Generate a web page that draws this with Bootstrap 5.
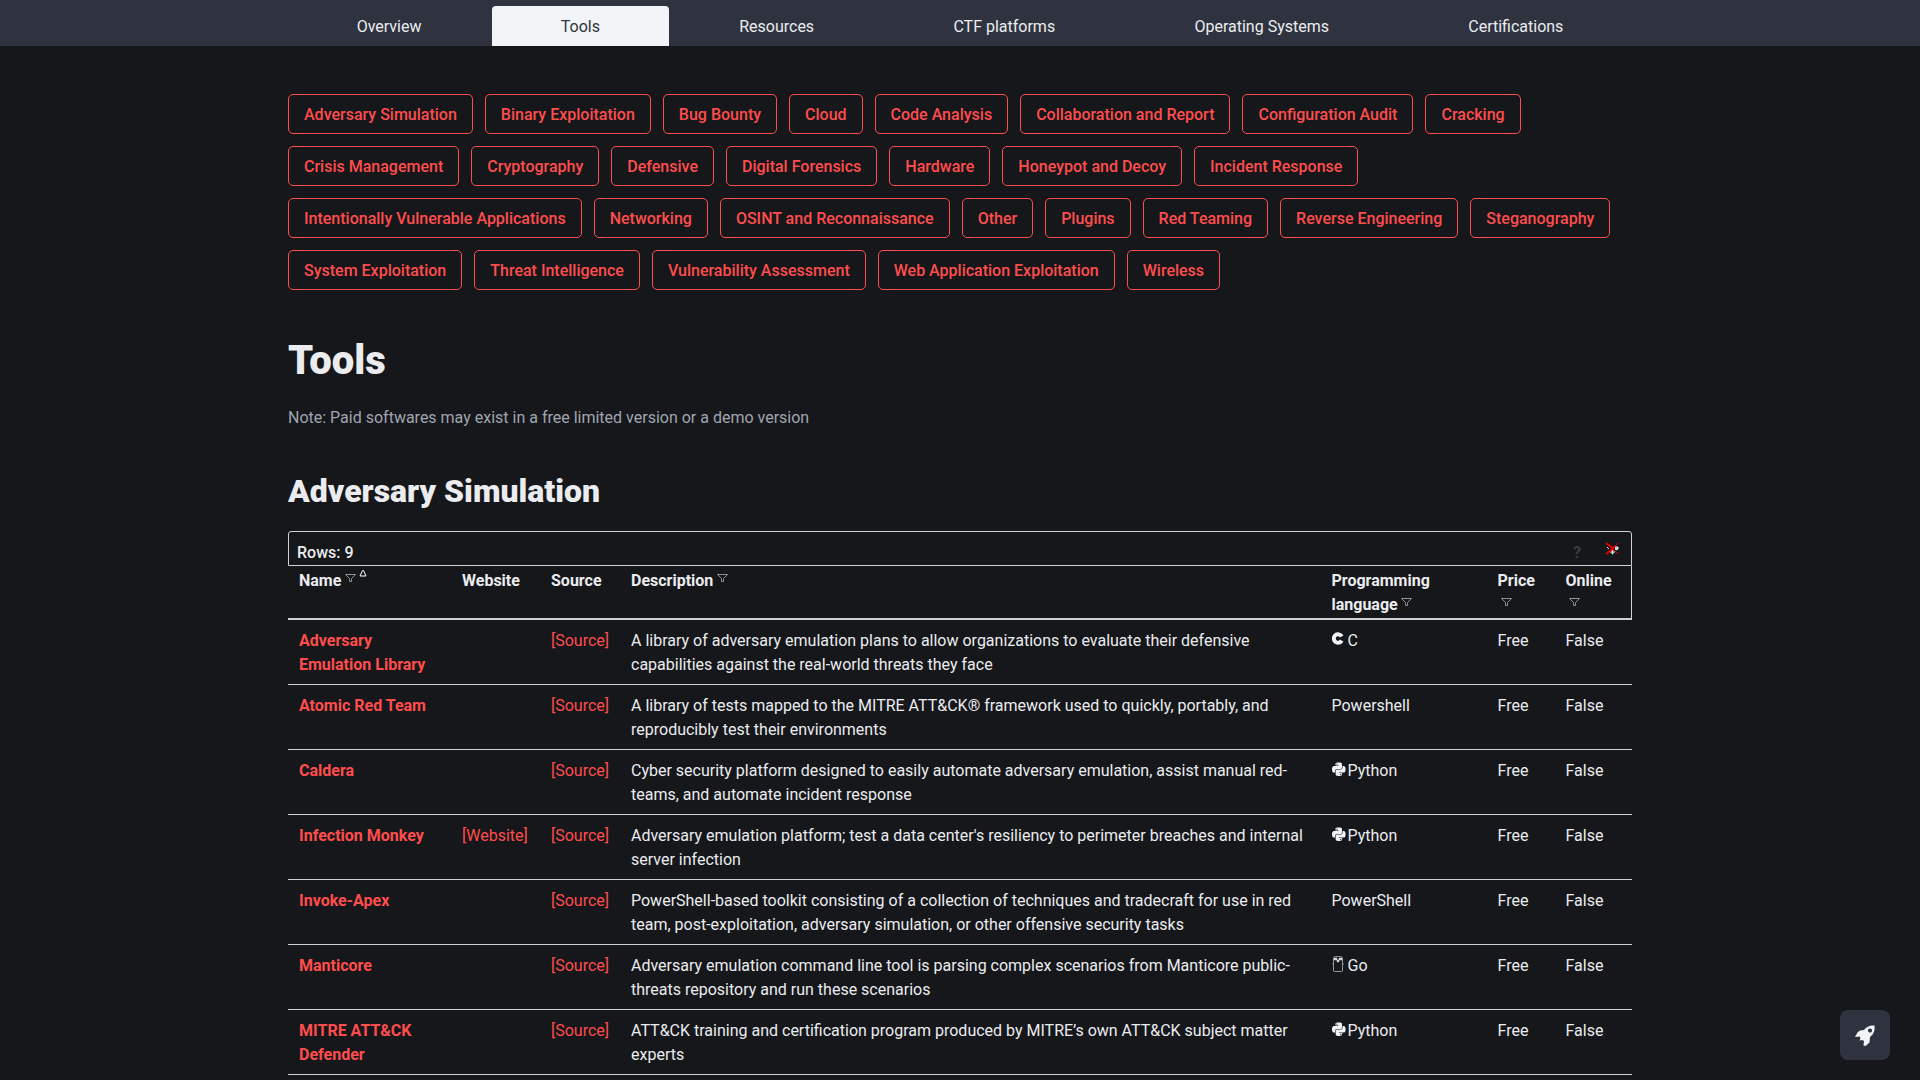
<!DOCTYPE html>
<html lang="en">
<head>
<meta charset="utf-8">
<meta name="viewport" content="width=device-width, initial-scale=1">
<title>Tools</title>
<link href="https://cdn.jsdelivr.net/npm/bootstrap@5.3.0/dist/css/bootstrap.min.css" rel="stylesheet">
<style>
  :root { --ink: #ebecf0; --paper: #15171a; --bar: #2f333f; --accent: #ff4d4d; --line: #ced2d4; }
  body { background: var(--paper); color: var(--ink); font-family: Roboto, sans-serif; font-size: 16px; line-height: 24px; overflow-x: hidden; }
  .page-wrap { max-width: 1344px; }
  .top-bar { background: var(--bar); padding-top: 6px; }
  .top-tabs { gap: 2px; }
  .top-tabs .nav-link { color: var(--ink); padding: 9px 8px 7px; border-radius: 4px 4px 0 0; }
  .top-tabs .nav-link.active { background: #f3f4f7; color: #2f333f; }
  .category-list { gap: 12px; padding-top: 48px; }
  .category-list .btn { --bs-btn-color: var(--accent); --bs-btn-border-color: var(--accent); --bs-btn-hover-bg: var(--accent); --bs-btn-hover-color: #fff; --bs-btn-border-radius: 5px; --bs-btn-line-height: 24px; padding: 8px 15px 6px; font-weight: 500; }
  h1 { font-size: 40px; line-height: 48px; font-weight: 900; margin: 47px 0 21px; }
  h2 { font-size: 32px; line-height: 40px; font-weight: 900; margin: 0 0 20px; }
  .note-text { color: #a0a5b1; margin: 0 0 41px; }
  .filter-bar { border: 1px solid var(--line); border-radius: 3px 3px 0 0; height: 35px; padding: 9px 11px 0 8px; font-weight: 500; }
  .help-btn { color: #3a3c40; font-weight: 700; margin-right: 24px; }
  .reset-btn { margin-top: 1px; }
  .plain-btn { background: none; border: 0; padding: 0; line-height: 24px; }
  .tool-table { --bs-table-bg: transparent; --bs-table-color: var(--ink); table-layout: fixed; margin: 0; border-color: var(--line); color: var(--ink); }
  .tool-table > :not(caption) > * > * { padding: 9px 11px 7px; border-bottom: 1px solid var(--line); }
  .tool-table > thead > tr > th { padding: 3px 11px 1px; border-bottom: 2px solid var(--line); font-weight: 700; vertical-align: top; }
  .tool-table > thead > tr > th:last-child { border-right: 1px solid var(--line); }
  .tool-table a { color: var(--accent); text-decoration: none; }
  .w-name { width: 163px; } .w-site { width: 89px; } .w-source { width: 80px; }
  .w-lang { width: 166px; } .w-price { width: 68px; } .w-online { width: 77px; }
  .filter-icon { width: 11px; height: 8px; margin-left: 4px; vertical-align: 4px; }
  .filter-icon.low { margin-left: 3px; }
  .sort-icon { width: 8px; height: 7px; margin-left: 3px; vertical-align: 9px; }
  .lang-icon { width: 14px; height: 16px; margin-right: 2px; vertical-align: -1px; }
  .top-btn { width: 50px; height: 50px; right: 30px; bottom: 20px; background: var(--bar); border: 0; border-radius: 8px; }
</style>
</head>
<body>
<svg class="d-none" aria-hidden="true">
  <symbol id="funnel" viewBox="0 0 11 8"><path d="M.5 .5h10L6.5 4.500V7.500h-2V4.500z" fill="none" stroke="#8d8f92"/></symbol>
  <symbol id="python" viewBox="0 -16 460 526"><path fill="#f0f2f5" d="M439.800 200.500c-7.700-30.900-22.300-54.200-53.400-54.200h-40.100v47.400c0 36.800-31.200 67.800-66.800 67.800H172.700c-29.200 0-53.400 25-53.400 54.300v101.800c0 29 25.200 46 53.400 54.300 33.800 9.900 66.300 11.700 106.800 0 26.900-7.800 53.400-23.500 53.400-54.300v-40.700H226.200v-13.600h160.200c31.100 0 42.600-21.700 53.400-54.200 11.200-33.500 10.700-65.700 0-108.600zM286.200 404c11.100 0 20.100 9.100 20.100 20.300 0 11.300-9 20.400-20.100 20.400-11 0-20.100-9.200-20.100-20.400.1-11.300 9.100-20.300 20.100-20.300zM167.800 248.100h106.800c29.700 0 53.400-24.500 53.400-54.300V91.900c0-29-24.400-50.700-53.400-55.600-35.800-5.900-74.700-5.600-106.800.1-45.200 8-53.400 24.700-53.400 55.600v40.700h106.900v13.600h-147c-31.100 0-58.300 18.700-66.800 54.200-9.800 40.700-10.200 66.100 0 108.600 7.600 31.600 25.700 54.200 56.800 54.200H101v-48.800c0-35.300 30.500-66.400 66.800-66.400zm-6.700-142.600c-11.100 0-20.100-9.100-20.100-20.300.1-11.300 9-20.400 20.100-20.400 11 0 20.100 9.200 20.100 20.400s-9 20.300-20.100 20.300z"/></symbol>
</svg>

<header class="top-bar">
  <div class="page-wrap mx-auto">
    <nav class="nav nav-fill top-tabs" aria-label="Main">
      <a class="nav-link" href="#">Overview</a>
      <a class="nav-link active" aria-current="page" href="#">Tools</a>
      <a class="nav-link" href="#">Resources</a>
      <a class="nav-link" href="#">CTF platforms</a>
      <a class="nav-link" href="#">Operating Systems</a>
      <a class="nav-link" href="#">Certifications</a>
    </nav>
  </div>
</header>

<main class="page-wrap mx-auto">
  <div class="category-list d-flex flex-wrap">
    <a class="btn" href="#">Adversary Simulation</a>
    <a class="btn" href="#">Binary Exploitation</a>
    <a class="btn" href="#">Bug Bounty</a>
    <a class="btn" href="#">Cloud</a>
    <a class="btn" href="#">Code Analysis</a>
    <a class="btn" href="#">Collaboration and Report</a>
    <a class="btn" href="#">Configuration Audit</a>
    <a class="btn" href="#">Cracking</a>
    <a class="btn" href="#">Crisis Management</a>
    <a class="btn" href="#">Cryptography</a>
    <a class="btn" href="#">Defensive</a>
    <a class="btn" href="#">Digital Forensics</a>
    <a class="btn" href="#">Hardware</a>
    <a class="btn" href="#">Honeypot and Decoy</a>
    <a class="btn" href="#">Incident Response</a>
    <a class="btn" href="#">Intentionally Vulnerable Applications</a>
    <a class="btn" href="#">Networking</a>
    <a class="btn" href="#">OSINT and Reconnaissance</a>
    <a class="btn" href="#">Other</a>
    <a class="btn" href="#">Plugins</a>
    <a class="btn" href="#">Red Teaming</a>
    <a class="btn" href="#">Reverse Engineering</a>
    <a class="btn" href="#">Steganography</a>
    <a class="btn" href="#">System Exploitation</a>
    <a class="btn" href="#">Threat Intelligence</a>
    <a class="btn" href="#">Vulnerability Assessment</a>
    <a class="btn" href="#">Web Application Exploitation</a>
    <a class="btn" href="#">Wireless</a>
  </div>

  <h1>Tools</h1>
  <p class="note-text">Note: Paid softwares may exist in a free limited version or a demo version</p>
  <h2>Adversary Simulation</h2>

  <div class="filter-bar d-flex align-items-start">
    <span class="me-auto">Rows: 9</span>
    <button type="button" class="plain-btn help-btn" title="Help">?</button>
    <button type="button" class="plain-btn reset-btn d-flex" aria-label="Clear filters">
      <svg width="15" height="14" viewBox="0 0 15 14"><path d="M2 5l4 4v4h3V9l4-4z" fill="#000"/><path d="M2 5l2 2M10 5h3v2l-2 1zM7 8h1v4H7zM5 10h5" fill="#b9d3dc" stroke="#dfe8ea"/><path d="M1 1l4 3 4 4M1 12l5-4 4-4" fill="none" stroke="#e00000" stroke-width="2"/><path d="M9 8l4 4M10 4l3-3" fill="none" stroke="#e00000"/></svg>
    </button>
  </div>

  <table class="table tool-table">
    <colgroup><col class="w-name"><col class="w-site"><col class="w-source"><col><col class="w-lang"><col class="w-price"><col class="w-online"></colgroup>
    <thead>
      <tr>
        <th scope="col">Name<svg class="filter-icon"><use href="#funnel"/></svg><svg class="sort-icon" viewBox="0 0 8 7"><path d="M3.500 .5h1l2.500 5.500h-6z" fill="none" stroke="#fff"/></svg></th>
        <th scope="col">Website</th>
        <th scope="col">Source</th>
        <th scope="col">Description<svg class="filter-icon"><use href="#funnel"/></svg></th>
        <th scope="col">Programming language<svg class="filter-icon low"><use href="#funnel"/></svg></th>
        <th scope="col">Price <svg class="filter-icon low"><use href="#funnel"/></svg></th>
        <th scope="col">Online <svg class="filter-icon low"><use href="#funnel"/></svg></th>
      </tr>
    </thead>
    <tbody>
      <tr>
        <td><a class="fw-bold" href="#">Adversary Emulation Library</a></td><td></td><td><a href="#">[Source]</a></td>
        <td>A library of adversary emulation plans to allow organizations to evaluate their defensive capabilities against the real-world threats they face</td>
        <td><svg class="lang-icon" viewBox="0 0 14 16"><path d="M9.700 5.500A4.200 4.200 0 1 0 9.700 9.500" fill="none" stroke="#f0f2f5" stroke-width="4"/></svg>C</td><td>Free</td><td>False</td>
      </tr>
      <tr>
        <td><a class="fw-bold" href="#">Atomic Red Team</a></td><td></td><td><a href="#">[Source]</a></td>
        <td>A library of tests mapped to the MITRE ATT&amp;CK® framework used to quickly, portably, and reproducibly test their environments</td>
        <td>Powershell</td><td>Free</td><td>False</td>
      </tr>
      <tr>
        <td><a class="fw-bold" href="#">Caldera</a></td><td></td><td><a href="#">[Source]</a></td>
        <td>Cyber security platform designed to easily automate adversary emulation, assist manual red-teams, and automate incident response</td>
        <td><svg class="lang-icon"><use href="#python"/></svg>Python</td><td>Free</td><td>False</td>
      </tr>
      <tr>
        <td><a class="fw-bold" href="#">Infection Monkey</a></td><td><a href="#">[Website]</a></td><td><a href="#">[Source]</a></td>
        <td>Adversary emulation platform; test a data center's resiliency to perimeter breaches and internal server infection</td>
        <td><svg class="lang-icon"><use href="#python"/></svg>Python</td><td>Free</td><td>False</td>
      </tr>
      <tr>
        <td><a class="fw-bold" href="#">Invoke-Apex</a></td><td></td><td><a href="#">[Source]</a></td>
        <td>PowerShell-based toolkit consisting of a collection of techniques and tradecraft for use in red team, post-exploitation, adversary simulation, or other offensive security tasks</td>
        <td>PowerShell</td><td>Free</td><td>False</td>
      </tr>
      <tr>
        <td><a class="fw-bold" href="#">Manticore</a></td><td></td><td><a href="#">[Source]</a></td>
        <td>Adversary emulation command line tool is parsing complex scenarios from Manticore public-threats repository and run these scenarios</td>
        <td><svg class="lang-icon" viewBox="0 0 14 16"><path d="M1.500 2.500v12q0 1 1 1h7q1 0 1-1v-12M1.500 2.500q0-2 2-2h5q2 0 2 2" fill="none" stroke="#8f9296"/><path d="M2 2h3v2H2zM7 2h3v2H7zM5 4h2v2H5zM0 8h1.500M10.500 8H12M1 14h1M10 14h1" fill="#d5d8da" stroke="#d5d8da" stroke-width=".5"/></svg>Go</td><td>Free</td><td>False</td>
      </tr>
      <tr>
        <td><a class="fw-bold" href="#">MITRE ATT&amp;CK Defender</a></td><td></td><td><a href="#">[Source]</a></td>
        <td>ATT&amp;CK training and certification program produced by MITRE’s own ATT&amp;CK subject matter experts</td>
        <td><svg class="lang-icon"><use href="#python"/></svg>Python</td><td>Free</td><td>False</td>
      </tr>
    </tbody>
  </table>
</main>

<button type="button" class="top-btn position-fixed d-flex align-items-center justify-content-center p-0" aria-label="Back to top">
  <svg width="20" height="21" viewBox="0 0 20 21"><path fill="#f3f4f7" fill-rule="evenodd" d="M19.500 .5C15 0 11.500 1.500 9 5L5 5.500 2.500 7.500 0 12l4.500-.5 1 1.500-1 2.500 2.500-.5L9 16l-.5 4.500 2 .5 4-3.500.5-5.500c4-3 5-6.500 4.500-11.500zM15 3.500a2 2 0 1 1 0 4.200 2 2 0 0 1 0-4.200z"/></svg>
</button>
<script src="https://cdn.jsdelivr.net/npm/bootstrap@5.3.0/dist/js/bootstrap.bundle.min.js"></script>
</body>
</html>
